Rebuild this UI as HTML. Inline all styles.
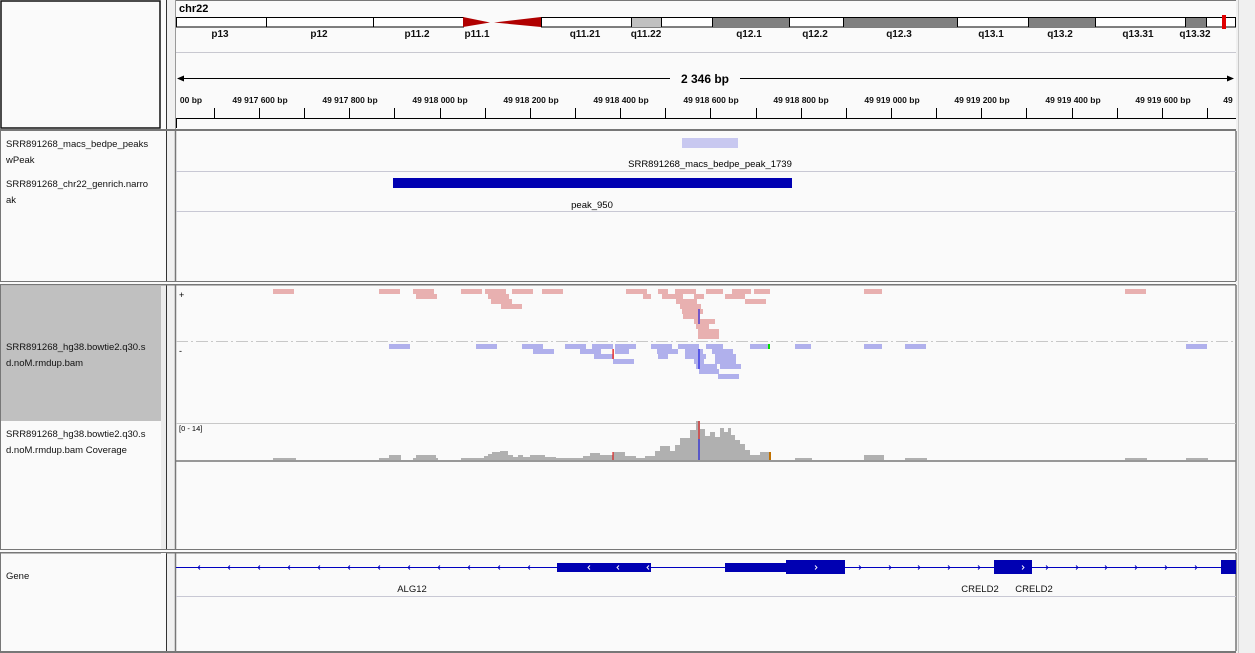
<!DOCTYPE html>
<html><head><meta charset="utf-8"><style>
html,body{margin:0;padding:0;background:#fafafa;width:1255px;height:653px;overflow:hidden}
svg{display:block}
text{font-family:"Liberation Sans",sans-serif}
</style></head><body>
<svg width="1255" height="653" viewBox="0 0 1255 653" xmlns="http://www.w3.org/2000/svg">
<rect width="1255" height="653" fill="#fafafa"/>
<!-- right scrollbar -->
<rect x="1236" y="0" width="19" height="653" fill="#f0f0f0"/>
<line x1="1238.5" y1="0" x2="1238.5" y2="653" stroke="#c8c8c8"/>
<!-- divider column -->
<rect x="166" y="0" width="9" height="653" fill="#f0f0f0"/>
<line x1="166.5" y1="0" x2="166.5" y2="653" stroke="#333"/>

<!-- ===== Header panel ===== -->
<rect x="1" y="1" width="159" height="127" fill="#fafafa" stroke="#111" stroke-width="1.5"/>
<rect x="175" y="0" width="1061" height="129" fill="#fafafa"/>
<line x1="175" y1="0.5" x2="1236" y2="0.5" stroke="#777"/>
<line x1="175.5" y1="0" x2="175.5" y2="129" stroke="#999"/>
<text x="179" y="12" font-size="11" font-weight="bold">chr22</text>
<!-- cytoband -->
<g stroke="#000" stroke-width="1">
<rect x="176.5" y="17.5" width="287" height="9.5" fill="#fff"/>
<rect x="541.5" y="17.5" width="694" height="9.5" fill="#fff"/>
</g>
<rect x="631" y="18" width="30" height="9" fill="#c0c0c0"/>
<rect x="712" y="18" width="77" height="9" fill="#808080"/>
<rect x="843" y="18" width="114" height="9" fill="#808080"/>
<rect x="1028" y="18" width="67" height="9" fill="#808080"/>
<rect x="1185" y="18" width="21" height="9" fill="#808080"/>
<g stroke="#000"><line x1="266.5" y1="17" x2="266.5" y2="27"/><line x1="373.5" y1="17" x2="373.5" y2="27"/><line x1="631.5" y1="17" x2="631.5" y2="27"/><line x1="661.5" y1="17" x2="661.5" y2="27"/><line x1="712.5" y1="17" x2="712.5" y2="27"/><line x1="789.5" y1="17" x2="789.5" y2="27"/><line x1="843.5" y1="17" x2="843.5" y2="27"/><line x1="957.5" y1="17" x2="957.5" y2="27"/><line x1="1028.5" y1="17" x2="1028.5" y2="27"/><line x1="1095.5" y1="17" x2="1095.5" y2="27"/><line x1="1185.5" y1="17" x2="1185.5" y2="27"/><line x1="1206.5" y1="17" x2="1206.5" y2="27"/></g>
<polygon points="463,17 463,27 490,22.5" fill="#b00000"/>
<polygon points="494,22.5 541,17 541,27" fill="#b00000"/>
<rect x="1222" y="15" width="4" height="14" fill="#e00000"/>
<g font-size="10" font-weight="bold" text-anchor="middle" fill="#111">
<text x="220" y="37">p13</text><text x="319" y="37">p12</text><text x="417" y="37">p11.2</text><text x="477" y="37">p11.1</text>
<text x="585" y="37">q11.21</text><text x="646" y="37">q11.22</text><text x="749" y="37">q12.1</text><text x="815" y="37">q12.2</text>
<text x="899" y="37">q12.3</text><text x="991" y="37">q13.1</text><text x="1060" y="37">q13.2</text><text x="1138" y="37">q13.31</text><text x="1195" y="37">q13.32</text>
</g>
<line x1="176" y1="52.5" x2="1236" y2="52.5" stroke="#c8c8d0"/>
<!-- ruler -->
<line x1="179" y1="78.5" x2="670" y2="78.5" stroke="#000"/>
<line x1="740" y1="78.5" x2="1233" y2="78.5" stroke="#000"/>
<polygon points="177,78.5 184,75.5 184,81.5" fill="#000"/>
<polygon points="1234,78.5 1227,75.5 1227,81.5" fill="#000"/>
<text x="705" y="83" font-size="12" font-weight="bold" text-anchor="middle">2 346 bp</text>
<g font-size="8.5" font-weight="bold" text-anchor="middle" fill="#111">
<text x="191" y="103">00 bp</text>
<text x="260" y="103">49 917 600 bp</text><text x="350" y="103">49 917 800 bp</text><text x="440" y="103">49 918 000 bp</text>
<text x="531" y="103">49 918 200 bp</text><text x="621" y="103">49 918 400 bp</text><text x="711" y="103">49 918 600 bp</text>
<text x="801" y="103">49 918 800 bp</text><text x="892" y="103">49 919 000 bp</text><text x="982" y="103">49 919 200 bp</text>
<text x="1073" y="103">49 919 400 bp</text><text x="1163" y="103">49 919 600 bp</text><text x="1228" y="103">49</text>
</g>
<g stroke="#000" id="ticks">
<line x1="214.5" y1="108" x2="214.5" y2="118"/><line x1="259.5" y1="108" x2="259.5" y2="118"/><line x1="304.5" y1="108" x2="304.5" y2="118"/><line x1="349.5" y1="108" x2="349.5" y2="118"/><line x1="394.5" y1="108" x2="394.5" y2="118"/><line x1="440.5" y1="108" x2="440.5" y2="118"/><line x1="485.5" y1="108" x2="485.5" y2="118"/><line x1="530.5" y1="108" x2="530.5" y2="118"/><line x1="575.5" y1="108" x2="575.5" y2="118"/><line x1="620.5" y1="108" x2="620.5" y2="118"/><line x1="665.5" y1="108" x2="665.5" y2="118"/><line x1="710.5" y1="108" x2="710.5" y2="118"/><line x1="756.5" y1="108" x2="756.5" y2="118"/><line x1="801.5" y1="108" x2="801.5" y2="118"/><line x1="846.5" y1="108" x2="846.5" y2="118"/><line x1="891.5" y1="108" x2="891.5" y2="118"/><line x1="936.5" y1="108" x2="936.5" y2="118"/><line x1="981.5" y1="108" x2="981.5" y2="118"/><line x1="1026.5" y1="108" x2="1026.5" y2="118"/><line x1="1072.5" y1="108" x2="1072.5" y2="118"/><line x1="1117.5" y1="108" x2="1117.5" y2="118"/><line x1="1162.5" y1="108" x2="1162.5" y2="118"/><line x1="1207.5" y1="108" x2="1207.5" y2="118"/>
</g>
<line x1="176" y1="118.5" x2="1236" y2="118.5" stroke="#000"/>
<rect x="176" y="119" width="1060" height="9" fill="#fafafa"/>
<line x1="176.5" y1="118" x2="176.5" y2="128" stroke="#000"/>

<!-- panel separators -->
<rect x="0" y="129" width="1236" height="2" fill="#777"/>
<rect x="0" y="281" width="1236" height="4" fill="#fafafa"/>
<line x1="0" y1="281.5" x2="1236" y2="281.5" stroke="#777"/>
<rect x="0" y="284" width="1236" height="1.5" fill="#777"/>
<rect x="0" y="549" width="1236" height="4" fill="#fafafa"/>
<line x1="0" y1="549.5" x2="1236" y2="549.5" stroke="#777"/>
<rect x="0" y="552" width="1236" height="1.5" fill="#777"/>
<rect x="0" y="651" width="1236" height="2" fill="#777"/>
<line x1="0.5" y1="131" x2="0.5" y2="281" stroke="#777"/>
<line x1="0.5" y1="285" x2="0.5" y2="549" stroke="#777"/>
<line x1="0.5" y1="553" x2="0.5" y2="651" stroke="#777"/>
<g stroke="#777" stroke-width="1.5">
<line x1="175.5" y1="131" x2="175.5" y2="281"/><line x1="1236" y1="131" x2="1236" y2="281"/>
<line x1="175.5" y1="285" x2="175.5" y2="549"/><line x1="1236" y1="285" x2="1236" y2="549"/>
<line x1="175.5" y1="553" x2="175.5" y2="651"/><line x1="1236" y1="553" x2="1236" y2="651"/>
</g>

<!-- ===== Feature panel ===== -->
<g font-size="9.5" fill="#111">
<text x="6" y="147">SRR891268_macs_bedpe_peaks</text>
<text x="6" y="163">wPeak</text>
<text x="6" y="187">SRR891268_chr22_genrich.narro</text>
<text x="6" y="203">ak</text>
</g>
<rect x="161" y="131" width="5" height="150" fill="#fafafa"/>
<rect x="682" y="138" width="56" height="10" fill="#c8c8f0"/>
<text x="710" y="167" font-size="9.5" text-anchor="middle">SRR891268_macs_bedpe_peak_1739</text>
<line x1="176" y1="171.5" x2="1236" y2="171.5" stroke="#c8c8d4"/>
<rect x="393" y="178" width="399" height="10" fill="#0000b2"/>
<text x="592" y="208" font-size="9.5" text-anchor="middle">peak_950</text>
<line x1="176" y1="211.5" x2="1236" y2="211.5" stroke="#c8c8d4"/>

<!-- ===== Alignment panel ===== -->
<rect x="1" y="286" width="160" height="135" fill="#c0c0c0"/>
<rect x="161" y="286" width="5" height="263" fill="#ececec"/>
<g font-size="9.5" fill="#111">
<text x="6" y="350">SRR891268_hg38.bowtie2.q30.s</text>
<text x="6" y="366">d.noM.rmdup.bam</text>
<text x="6" y="437">SRR891268_hg38.bowtie2.q30.s</text>
<text x="6" y="453">d.noM.rmdup.bam Coverage</text>
</g>
<text x="179" y="298" font-size="9">+</text>
<text x="179" y="354" font-size="9">-</text>
<line x1="176" y1="341.5" x2="1236" y2="341.5" stroke="#c8c8c8" stroke-dasharray="12,3,2,3"/>
<g fill="#e8b0b0">
<rect x="273" y="289" width="21" height="5"/><rect x="379" y="289" width="21" height="5"/><rect x="413" y="289" width="21" height="5"/><rect x="461" y="289" width="21" height="5"/><rect x="485" y="289" width="21" height="5"/><rect x="512" y="289" width="21" height="5"/><rect x="542" y="289" width="21" height="5"/><rect x="626" y="289" width="21" height="5"/><rect x="658" y="289" width="10" height="5"/><rect x="675" y="289" width="21" height="5"/><rect x="706" y="289" width="17" height="5"/><rect x="732" y="289" width="19" height="5"/><rect x="754" y="289" width="16" height="5"/><rect x="864" y="289" width="18" height="5"/><rect x="1125" y="289" width="21" height="5"/>
<rect x="416" y="294" width="21" height="5"/><rect x="488" y="294" width="21" height="5"/><rect x="643" y="294" width="8" height="5"/><rect x="662" y="294" width="21" height="5"/><rect x="694" y="294" width="10" height="5"/><rect x="725" y="294" width="20" height="5"/>
<rect x="491" y="299" width="21" height="5"/><rect x="676" y="299" width="21" height="5"/><rect x="745" y="299" width="21" height="5"/>
<rect x="501" y="304" width="21" height="5"/><rect x="680" y="304" width="21" height="5"/>
<rect x="682" y="309" width="21" height="5"/><rect x="683" y="314" width="17" height="5"/><rect x="694" y="319" width="21" height="5"/><rect x="696" y="324" width="13" height="5"/><rect x="698" y="329" width="21" height="10"/>
</g>
<rect x="698.5" y="309" width="1" height="15" fill="#0000e0"/>
<g fill="#b0b0ec">
<rect x="389" y="344" width="21" height="5"/><rect x="476" y="344" width="21" height="5"/><rect x="522" y="344" width="21" height="5"/><rect x="565" y="344" width="21" height="5"/><rect x="592" y="344" width="21" height="5"/><rect x="615" y="344" width="21" height="5"/><rect x="651" y="344" width="21" height="5"/><rect x="678" y="344" width="21" height="5"/><rect x="706" y="344" width="17" height="5"/><rect x="750" y="344" width="20" height="5"/><rect x="795" y="344" width="16" height="5"/><rect x="864" y="344" width="18" height="5"/><rect x="905" y="344" width="21" height="5"/><rect x="1186" y="344" width="21" height="5"/>
<rect x="533" y="349" width="21" height="5"/><rect x="580" y="349" width="21" height="5"/><rect x="615" y="349" width="14" height="5"/><rect x="657" y="349" width="21" height="5"/><rect x="685" y="349" width="18" height="5"/><rect x="712" y="349" width="21" height="5"/>
<rect x="594" y="354" width="19" height="5"/><rect x="658" y="354" width="10" height="5"/><rect x="685" y="354" width="21" height="5"/><rect x="715" y="354" width="21" height="5"/>
<rect x="613" y="359" width="21" height="5"/><rect x="694" y="359" width="10" height="5"/><rect x="715" y="359" width="21" height="5"/>
<rect x="696" y="364" width="21" height="5"/><rect x="720" y="364" width="21" height="5"/>
<rect x="699" y="369" width="20" height="5"/><rect x="718" y="374" width="21" height="5"/>
</g>
<rect x="768" y="344" width="2" height="5" fill="#00e000"/>
<rect x="612.5" y="349" width="1.2" height="10" fill="#e00000"/>
<rect x="698.5" y="349" width="1" height="20" fill="#0000e0"/>
<!-- coverage -->
<line x1="176" y1="423.5" x2="1236" y2="423.5" stroke="#c8c8c8"/>
<text x="179" y="431" font-size="7.5">[0 - 14]</text>
<path fill="#b0b0b0" d="M273,460V458H296V460Z M379,460V458H389V455H401V460Z M413,460V458H416V455H436V458H438V460Z
M461,460V458H484V456H488V454H492V452H500V451H508V455H513V457H518V455H523V457H530V455H545V457H556V458H583V456H590V453H600V455H613V452H625V456H636V458H645V456H655V451H660V446H670V451H675V445H680V438H690V430H696V421H700V429H705V436H710V432H715V437H720V428H724V432H728V428H731V435H735V440H740V444H745V450H750V455H760V452H770V460Z
M795,460V458H812V460Z M864,460V455H884V460Z M905,460V458H927V460Z M1125,460V458H1147V460Z M1186,460V458H1208V460Z"/>
<rect x="698.5" y="421" width="1" height="39" fill="#0000e0"/>
<rect x="698.5" y="421" width="1" height="18" fill="#e00000"/>
<rect x="612.5" y="452" width="1" height="8" fill="#e00000"/>
<rect x="769" y="452" width="2" height="8" fill="#c07000"/>
<line x1="176" y1="461" x2="1236" y2="461" stroke="#777" stroke-width="1.5"/>

<!-- ===== Gene panel ===== -->
<text x="6" y="579" font-size="9.5" fill="#111">Gene</text>
<rect x="161" y="553" width="5" height="98" fill="#fafafa"/>
<line x1="176" y1="567.5" x2="1236" y2="567.5" stroke="#0000c0"/>
<rect x="557" y="563" width="94" height="9" fill="#0000b2"/>
<rect x="725" y="563" width="61" height="9" fill="#0000b2"/>
<rect x="786" y="560" width="59" height="14" fill="#0000b2"/>
<rect x="994" y="560" width="38" height="14" fill="#0000b2"/>
<rect x="1221" y="560" width="15" height="14" fill="#0000b2"/>
<g fill="none" stroke="#0000c0" stroke-width="0.9">
<path d="M200,565.5l-2,2l2,2 M230,565.5l-2,2l2,2 M260,565.5l-2,2l2,2 M290,565.5l-2,2l2,2 M320,565.5l-2,2l2,2 M350,565.5l-2,2l2,2 M380,565.5l-2,2l2,2 M410,565.5l-2,2l2,2 M440,565.5l-2,2l2,2 M470,565.5l-2,2l2,2 M500,565.5l-2,2l2,2 M530,565.5l-2,2l2,2"/>
<path d="M859,565.5l2,2l-2,2 M889,565.5l2,2l-2,2 M918,565.5l2,2l-2,2 M948,565.5l2,2l-2,2 M978,565.5l2,2l-2,2 M1046,565.5l2,2l-2,2 M1076,565.5l2,2l-2,2 M1105,565.5l2,2l-2,2 M1135,565.5l2,2l-2,2 M1165,565.5l2,2l-2,2 M1195,565.5l2,2l-2,2"/>
</g>
<g fill="none" stroke="#fff" stroke-width="0.9">
<path d="M590,565.5l-2,2l2,2 M619,565.5l-2,2l2,2 M649,565.5l-2,2l2,2 M815,565.5l2,2l-2,2 M1022,565.5l2,2l-2,2"/>
</g>
<g font-size="9.5" text-anchor="middle" fill="#111">
<text x="412" y="592">ALG12</text><text x="980" y="592">CRELD2</text><text x="1034" y="592">CRELD2</text>
</g>
<line x1="176" y1="596.5" x2="1236" y2="596.5" stroke="#c8c8d4"/>
</svg>
</body></html>
